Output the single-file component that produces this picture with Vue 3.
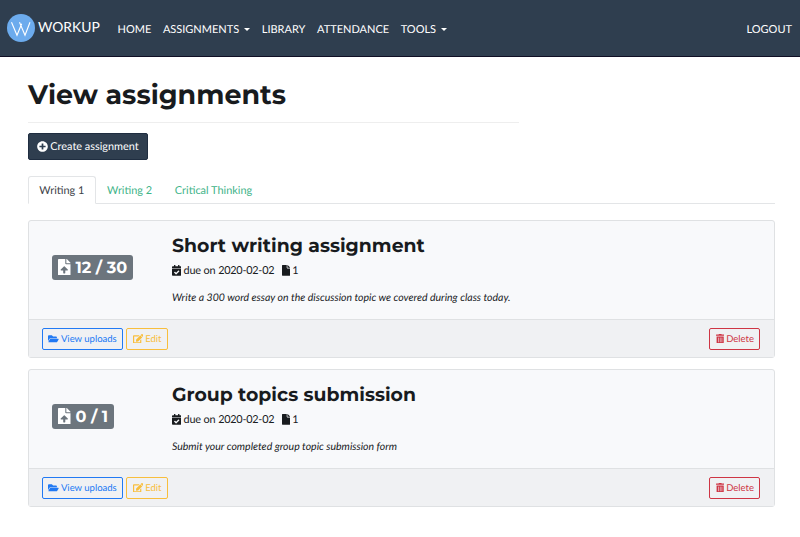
<script setup>
import { ref, h } from 'vue'

const icons = {
  plus: [512, 'M256 8C119 8 8 119 8 256s111 248 248 248 248-111 248-248S393 8 256 8zm144 276c0 6.600-5.400 12-12 12h-92v92c0 6.600-5.400 12-12 12h-56c-6.600 0-12-5.400-12-12v-92h-92c-6.600 0-12-5.400-12-12v-56c0-6.600 5.400-12 12-12h92v-92c0-6.600 5.400-12 12-12h56c6.600 0 12 5.400 12 12v92h92c6.600 0 12 5.400 12 12v56z'],
  upload: [384, 'M224 136V0H24C10.700 0 0 10.700 0 24v464c0 13.300 10.700 24 24 24h336c13.300 0 24-10.700 24-24V160H248c-13.200 0-24-10.800-24-24zm65.180 216.010H224v80c0 8.840-7.160 16-16 16h-32c-8.840 0-16-7.160-16-16v-80H94.820c-14.280 0-21.410-17.290-11.270-27.360l96.420-95.700c6.650-6.610 17.390-6.610 24.040 0l96.420 95.700c10.150 10.070 3.030 27.360-11.250 27.360zM377 105L279.100 7c-4.500-4.500-10.600-7-17-7H256v128h128v-6.100c0-6.300-2.500-12.400-7-16.900z'],
  file: [384, 'M224 136V0H24C10.700 0 0 10.700 0 24v464c0 13.300 10.700 24 24 24h336c13.300 0 24-10.700 24-24V160H248c-13.200 0-24-10.800-24-24zm160-14.100v6.100H256V0h6.100c6.400 0 12.500 2.500 17 7l97.900 98c4.500 4.500 7 10.600 7 16.900z'],
  calendar: [448, 'M436 160H12c-6.627 0-12-5.373-12-12v-36c0-26.510 21.490-48 48-48h48V12c0-6.627 5.373-12 12-12h40c6.627 0 12 5.373 12 12v52h128V12c0-6.627 5.373-12 12-12h40c6.627 0 12 5.373 12 12v52h48c26.510 0 48 21.490 48 48v36c0 6.627-5.373 12-12 12zM12 192h424c6.627 0 12 5.373 12 12v260c0 26.510-21.490 48-48 48H48c-26.510 0-48-21.490-48-48V204c0-6.627 5.373-12 12-12zm333.296 95.947l-28.169-28.398c-4.667-4.705-12.265-4.736-16.970-.068L194.120 364.665l-45.980-46.352c-4.667-4.705-12.266-4.736-16.971-.068l-28.397 28.170c-4.705 4.667-4.736 12.265-.068 16.970l82.601 83.269c4.667 4.705 12.265 4.736 16.970.068l142.953-141.805c4.705-4.667 4.736-12.265.068-16.970z'],
  folder: [576, 'M572.694 292.093L500.270 416.248A63.997 63.997 0 0 1 444.989 448H45.025c-18.523 0-30.064-20.093-20.731-36.093l72.424-124.155A64 64 0 0 1 152 256h399.964c18.523 0 30.064 20.093 20.730 36.093zM152 224h328v-48c0-26.510-21.490-48-48-48H272l-64-64H48C21.490 64 0 85.490 0 112v278.046l69.077-118.418C86.214 242.250 117.989 224 152 224z'],
  edit: [576, 'M402.600 83.200l90.200 90.200c3.800 3.800 3.800 10 0 13.800L274.400 405.600l-92.800 10.300c-12.400 1.400-22.900-9.100-21.500-21.500l10.300-92.800L388.800 83.200c3.800-3.800 10-3.800 13.800 0zm162-22.900l-48.800-48.800c-15.200-15.200-39.900-15.200-55.200 0l-35.400 35.400c-3.800 3.800-3.800 10 0 13.800l90.200 90.200c3.800 3.800 10 3.800 13.800 0l35.400-35.400c15.200-15.300 15.200-40 0-55.200zM384 346.200V448H64V128h229.800c3.200 0 6.200-1.300 8.500-3.500l40-40c7.600-7.600 2.200-20.500-8.500-20.500H48C21.500 64 0 85.500 0 112v352c0 26.500 21.500 48 48 48h352c26.500 0 48-21.500 48-48V306.200c0-10.700-12.900-16-20.500-8.500l-40 40c-2.200 2.300-3.500 5.300-3.500 8.500z'],
  trash: [448, 'M32 464a48 48 0 0 0 48 48h288a48 48 0 0 0 48-48V128H32zm272-256a16 16 0 0 1 32 0v224a16 16 0 0 1-32 0zm-96 0a16 16 0 0 1 32 0v224a16 16 0 0 1-32 0zm-96 0a16 16 0 0 1 32 0v224a16 16 0 0 1-32 0zM432 32H312l-9.400-18.700A24 24 0 0 0 281.100 0H166.800a23.720 23.720 0 0 0-21.400 13.300L136 32H16A16 16 0 0 0 0 48v32a16 16 0 0 0 16 16h416a16 16 0 0 0 16-16V48a16 16 0 0 0-16-16z'],
}

const Icon = (props) =>
  h('svg', { viewBox: `0 0 ${icons[props.name][0]} 512`, fill: 'currentColor', 'aria-hidden': 'true' }, [
    h('path', { d: icons[props.name][1] }),
  ])
Icon.props = ['name']

const nav = [
  { label: 'HOME' },
  { label: 'ASSIGNMENTS', menu: true },
  { label: 'LIBRARY' },
  { label: 'ATTENDANCE' },
  { label: 'TOOLS', menu: true },
]
const tabs = ['Writing 1', 'Writing 2', 'Critical Thinking']
const active = ref('Writing 1')
const assignments = [
  { title: 'Short writing assignment', count: '12 / 30', due: '2020-02-02', files: 1, text: 'Write a 300 word essay on the discussion topic we covered during class today.' },
  { title: 'Group topics submission', count: '0 / 1', due: '2020-02-02', files: 1, text: 'Submit your completed group topic submission form' },
]
</script>

<template>
  <nav class="navbar">
    <a class="brand">
      <svg class="logo" viewBox="0 0 28 28">
        <circle cx="14" cy="14" r="14" fill="#6cabed" />
        <path d="M4.500 8.200L10 21.300L14.700 9.800M12.500 8.200L18 21.300L23 8.200" fill="none" stroke="#fff" stroke-width="1.100" />
      </svg>
      <span>WORKUP</span>
    </a>
    <a v-for="n in nav" :key="n.label" class="nav-link">{{ n.label }}<i v-if="n.menu" class="caret"></i></a>
    <a class="nav-link logout">LOGOUT</a>
  </nav>

  <main>
    <header>
      <h1>View assignments</h1>
    </header>
    <button class="create"><Icon name="plus" />Create assignment</button>

    <div class="tabs">
      <button v-for="t in tabs" :key="t" class="tab" :class="{ active: t === active }" @click="active = t">{{ t }}</button>
    </div>

    <article v-for="a in assignments" :key="a.title" class="card">
      <div class="card-body">
        <div class="count-col">
          <div class="badge"><Icon name="upload" /><span>{{ a.count }}</span></div>
        </div>
        <div class="info">
          <h2>{{ a.title }}</h2>
          <div class="meta">
            <Icon name="calendar" /><span class="due">due on <span class="date">{{ a.due }}</span></span>
            <Icon name="file" /><span>{{ a.files }}</span>
          </div>
          <p>{{ a.text }}</p>
        </div>
      </div>
      <footer>
        <button class="btn blue"><Icon name="folder" /><span>View uploads</span></button>
        <button class="btn yellow"><Icon name="edit" /><span>Edit</span></button>
        <button class="btn red"><Icon name="trash" /><span>Delete</span></button>
      </footer>
    </article>
  </main>
</template>

<style>
body {
  margin: 0;
  background: #fff;
}
</style>

<style scoped>
* {
  box-sizing: border-box;
}
svg {
  display: block;
  flex: none;
}
button {
  font-family: inherit;
  text-rendering: inherit;
  cursor: pointer;
}
.navbar,
main {
  font-family: Lato, "Liberation Sans", sans-serif;
  color: #181b1e;
  text-rendering: geometricPrecision;
}
.navbar {
  display: flex;
  align-items: center;
  height: 57px;
  padding: 0 8px 0 7px;
  background: #2f3e4f;
  border-bottom: 1px solid #100f25;
  color: #fff;
}
.brand {
  display: flex;
  align-items: center;
  gap: 3px;
  width: 110.500px;
  font-size: 13.900px;
  line-height: 24px;
}
.brand span {
  padding-bottom: 3px;
}
.logo {
  width: 28px;
  height: 28px;
}
.nav-link {
  display: flex;
  align-items: center;
  margin-right: 11.600px;
  padding-top: 2px;
  font-size: 11px;
  line-height: 17px;
}
.caret {
  margin-left: 5px;
  border: 3.500px solid transparent;
  border-top-color: #fff;
  border-bottom: 0;
}
.logout {
  margin: 0 0 0 auto;
}
main {
  padding: 20px 25px 0 28px;
}
header {
  width: 491px;
  height: 46px;
  border-bottom: 1px solid #eee;
}
h1,
h2,
p {
  margin: 0;
}
h1,
h2,
.badge {
  font-family: Montserrat, Inter, sans-serif;
  font-weight: 700;
  white-space: nowrap;
}
h1 {
  font-size: 26.900px;
  line-height: 36px;
}
h2 {
  font-size: 18.850px;
  line-height: 26px;
}
.create {
  display: flex;
  align-items: center;
  justify-content: center;
  gap: 2px;
  width: 120px;
  height: 27px;
  margin-top: 10px;
  padding: 0;
  border: 1px solid #1f2d40;
  border-radius: 2px;
  background: #2f3e4f;
  color: #fff;
  font-size: 10.900px;
}
.create svg {
  width: 11px;
  height: 11px;
}
.tabs {
  display: flex;
  height: 28px;
  margin: 16px 0;
  border-bottom: 1px solid #e3e5e7;
}
.tab {
  height: 28px;
  padding: 0 10.300px;
  border: 1px solid transparent;
  border-radius: 3px 3px 0 0;
  background: none;
  color: #3fb489;
  font-size: 10.950px;
}
.tab.active {
  border-color: #e3e5e7 #e3e5e7 #fff;
  background: #fff;
  color: #3d4248;
}
.card {
  height: 138px;
  margin-bottom: 11px;
  border: 1px solid #dfe1e3;
  border-radius: 3px;
  background: #f8f9fb;
}
.card-body {
  display: flex;
  height: 98px;
}
.count-col {
  width: 143px;
  padding: 33.500px 0 0 23px;
}
.badge {
  display: flex;
  align-items: center;
  gap: 5px;
  width: max-content;
  height: 25px;
  padding: 0 6px;
  border-radius: 3px;
  background: #6c757d;
  color: #fff;
  font-size: 16.100px;
}
.badge svg {
  width: 12.500px;
  height: 16.700px;
}
.badge span {
  padding-top: 1px;
}
.info {
  padding-top: 12px;
}
.meta {
  display: flex;
  align-items: center;
  height: 17px;
  margin-top: 3px;
  gap: 2px;
  font-size: 10.900px;
}
.meta svg {
  height: 10.800px;
}
.due {
  margin-right: 6px;
  letter-spacing: -0.150px;
}
.date {
  letter-spacing: -0.250px;
}
p {
  margin-top: 11px;
  font-size: 10.500px;
  font-style: italic;
  line-height: 17px;
}
footer {
  display: flex;
  align-items: center;
  gap: 3px;
  height: 38px;
  padding: 0 13px;
  border-top: 1px solid #dfe1e3;
  background: #f0f1f3;
}
.btn {
  display: flex;
  align-items: center;
  justify-content: center;
  gap: 2px;
  height: 22px;
  padding: 0;
  border: 1px solid;
  border-radius: 2px;
  background: none;
  font-size: 9.500px;
}
.btn svg {
  height: 9.500px;
}
.btn span {
  padding-top: 1px;
}
.blue {
  width: 81px;
  color: #2179f3;
}
.yellow {
  width: 42px;
  color: #f8be3c;
}
.red {
  width: 51px;
  margin-left: auto;
  margin-right: 0.600px;
  color: #ce3544;
}
</style>
